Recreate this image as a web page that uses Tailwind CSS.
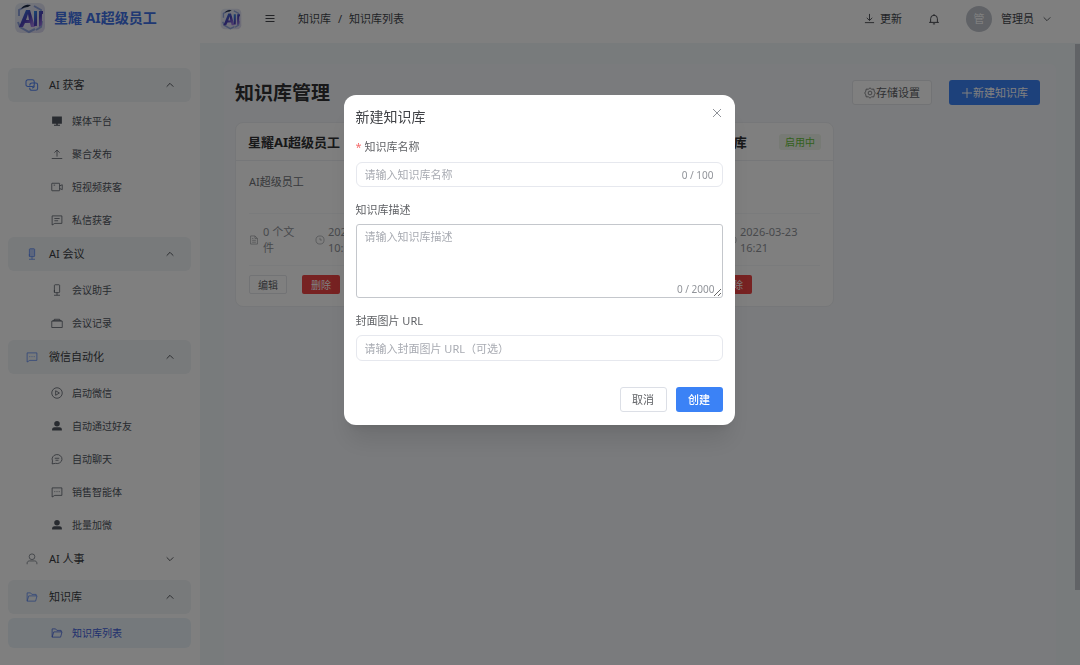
<!DOCTYPE html>
<html lang="zh-CN">
<head>
<meta charset="utf-8">
<title>知识库管理</title>
<script src="https://cdn.jsdelivr.net/npm/@tailwindcss/browser@4"></script>
</head>
<body class="h-screen overflow-hidden bg-white font-['Noto_Sans','Noto_Sans_CJK_SC',sans-serif] text-[11px] leading-4 text-[#44474d]">
<svg class="absolute size-0" aria-hidden="true">
  <defs>
    <linearGradient id="lg" x1="0" y1="0" x2="1" y2="1"><stop offset="0" stop-color="#2f8fe8"/><stop offset=".5" stop-color="#4a3fb8"/><stop offset="1" stop-color="#b98af0"/></linearGradient>
    <linearGradient id="lb" x1="0" y1="0" x2="1" y2="1"><stop offset="0" stop-color="#e9eff7"/><stop offset="1" stop-color="#d9d6ee"/></linearGradient>
    <symbol id="logo" viewBox="0 0 32 32">
      <rect x="1" y="1" width="30" height="30" rx="6" fill="url(#lb)"/>
      <path d="M14 3 5 8v6M4 20l2 5 9 5 6-3M20 4l7 4v5M28 19l-1 6-5 3" fill="none" stroke="#8fa3dc" stroke-width="2"/>
      <path d="M7 7Q10 2 17 3l-3 2Q10 5 7 7Z" fill="#1d2a44"/>
      <path d="M5 25 12 8h4l5 17h-4l-1-4h-5l-2 4ZM12 18h3l-1-6Z" fill="url(#lg)" fill-rule="evenodd"/>
      <path d="M20 9h3v15h-3zM25 9h4v3h-1v11l-3 2z" fill="url(#lg)"/>
    </symbol>
    <symbol id="folder" viewBox="0 0 16 16"><path d="M1.5 13.5v-11h4.6l1.7 2h5.7v2M1.5 13.5l2.2-7h11l-1.9 7Z"/></symbol>
    <symbol id="user" viewBox="0 0 16 16"><circle cx="8" cy="5" r="3.8"/><path d="M1.5 15v-1.6c0-1.8 1.500-2.800 3-2.800h7c1.500 0 3 1 3 2.800V15"/></symbol>
    <symbol id="userfill" viewBox="0 0 16 16"><g fill="currentColor" stroke="none"><circle cx="8" cy="5" r="3.700"/><path d="M1.500 14v-1.500c0-1.800 1.500-2.700 3-2.700h7c1.500 0 3 .9 3 2.700V14z"/></g></symbol>
    <symbol id="chat" viewBox="0 0 16 16"><path d="M1.500 2.500h13v10H5l-3.500 2.200ZM4.500 7.500h1.200M7.400 7.500h1.200M10.300 7.500h1.200"/></symbol>
    <symbol id="msg" viewBox="0 0 16 16"><path d="M1.500 2.500h13v10H5l-3.500 2.200ZM4.500 6h7M4.500 9h5"/></symbol>
    <symbol id="mic" viewBox="0 0 16 16"><rect x="4.500" y="1" width="7" height="10.500" rx="1"/><path d="M8 11.500V15M4 15h8M4.500 8v3.500"/></symbol>
    <symbol id="up" viewBox="0 0 12 12"><path d="M2 8 6 4l4 4"/></symbol>
    <symbol id="down" viewBox="0 0 12 12"><path d="M2 4l4 4 4-4"/></symbol>
    <symbol id="clock" viewBox="0 0 16 16"><circle cx="8" cy="8" r="6.500"/><path d="M8 4.500V8h3"/></symbol>
    <symbol id="doc" viewBox="0 0 16 16"><path d="M2.500 1.500h7l4 4v9h-11ZM9.500 1.500v4h4M5 8.500h6M5 11.500h6M5 5.500h2"/></symbol>
  </defs>
</svg>

<div class="flex h-full">
  <aside class="flex w-50 shrink-0 flex-col bg-white">
    <div class="flex h-10 shrink-0 items-center gap-2 pl-3.5 pb-1">
      <svg class="size-8"><use href="#logo"/></svg>
      <span class="text-[14px] font-bold text-[#4070e6]">星耀 AI超级员工</span>
    </div>
    <nav class="mt-7 flex flex-col px-2 pr-[9px] fill-none text-[#3a3d42]" aria-label="主菜单">
      <button class="flex h-[34px] w-full items-center gap-[11px] rounded-md bg-[#f0f4f7] pl-[18px] pr-4 text-left">
        <svg class="size-3 overflow-visible fill-none stroke-[#5585f2]" viewBox="0 0 16 16" stroke-width="1.400"><rect x="0" y="1" width="11" height="9" rx="2.500"/><path d="M5 8.500c0-2 1-3.300 3-3.300h5c1.500 0 2.500 1 2.500 2.500v4.800c0 1.500-1 2.500-2.500 2.500H8c-2 0-3-1-3-2.500v-1"/><path d="M11 9c0 2-1 3-3 3"/></svg>
        <span class="flex-1">AI 获客</span><svg class="size-2.5 fill-none stroke-current"><use href="#up"/></svg></button>
      <ul class="mb-px pt-0.5 text-[10px] text-[#505660]">
        <li><a href="#" class="flex h-[33px] items-center gap-[9px] pl-[43px]"><svg class="size-3" viewBox="0 0 16 16"><path d="M1.500 2h13v9.500h-13ZM7 11.500h2V13h3v1.200H4V13h3Z" fill="currentColor"/></svg>媒体平台</a></li>
        <li><a href="#" class="flex h-[33px] items-center gap-[9px] pl-[43px]"><svg class="size-3 fill-none stroke-current" viewBox="0 0 16 16"><path d="M8 11.500V3M4.500 6.200 8 2.800l3.500 3.400M1 14h14"/></svg>聚合发布</a></li>
        <li><a href="#" class="flex h-[33px] items-center gap-[9px] pl-[43px]"><svg class="size-3 fill-none stroke-current" viewBox="0 0 16 16"><rect x="1" y="3" width="10.500" height="10" rx=".5"/><path d="M11.500 6.500 15 5v6.500L11.500 10M3.500 5.500h2"/></svg>短视频获客</a></li>
        <li><a href="#" class="flex h-[33px] items-center gap-[9px] pl-[43px]"><svg class="size-3 fill-none stroke-current"><use href="#msg"/></svg>私信获客</a></li>
      </ul>
      <button class="flex h-[34px] w-full items-center gap-[11px] rounded-md bg-[#f0f4f7] pl-[18px] pr-4 text-left">
        <svg class="size-3 fill-[#b9cdfb] stroke-[#5585f2]"><use href="#mic"/></svg>
        <span class="flex-1">AI 会议</span><svg class="size-2.5 fill-none stroke-current"><use href="#up"/></svg></button>
      <ul class="mb-px pt-0.5 text-[10px] text-[#505660]">
        <li><a href="#" class="flex h-[33px] items-center gap-[9px] pl-[43px]"><svg class="size-3 fill-none stroke-current"><use href="#mic"/></svg>会议助手</a></li>
        <li><a href="#" class="flex h-[33px] items-center gap-[9px] pl-[43px]"><svg class="size-3 fill-none stroke-current" viewBox="0 0 16 16"><path d="M1 5.500h14v8.500H1ZM2.500 5.500v-1h11v1M4.500 4.500V3h7v1.500"/></svg>会议记录</a></li>
      </ul>
      <button class="flex h-[34px] w-full items-center gap-[11px] rounded-md bg-[#f0f4f7] pl-[18px] pr-4 text-left">
        <svg class="size-3 fill-none stroke-[#5585f2]"><use href="#chat"/></svg>
        <span class="flex-1">微信自动化</span><svg class="size-2.5 fill-none stroke-current"><use href="#up"/></svg></button>
      <ul class="mb-px pt-0.5 text-[10px] text-[#505660]">
        <li><a href="#" class="flex h-[33px] items-center gap-[9px] pl-[43px]"><svg class="size-3 fill-none stroke-current" viewBox="0 0 16 16"><circle cx="8" cy="8" r="7"/><path d="M6.200 5v6l5-3Z"/></svg>启动微信</a></li>
        <li><a href="#" class="flex h-[33px] items-center gap-[9px] pl-[43px]"><svg class="size-3"><use href="#userfill"/></svg>自动通过好友</a></li>
        <li><a href="#" class="flex h-[33px] items-center gap-[9px] pl-[43px]"><svg class="size-3 fill-none stroke-current" viewBox="0 0 16 16"><path d="M1.500 14.500 2 10.500A6.600 6 0 1 1 6 13.800ZM5 7h6M6 9.700h4"/></svg>自动聊天</a></li>
        <li><a href="#" class="flex h-[33px] items-center gap-[9px] pl-[43px]"><svg class="size-3 fill-none stroke-current"><use href="#chat"/></svg>销售智能体</a></li>
        <li><a href="#" class="flex h-[33px] items-center gap-[9px] pl-[43px]"><svg class="size-3"><use href="#userfill"/></svg>批量加微</a></li>
      </ul>
      <button class="mb-1 flex h-[34px] w-full items-center gap-[11px] rounded-md pl-[18px] pr-4 text-left">
        <svg class="size-3 fill-none stroke-[#6a7079]"><use href="#user"/></svg>
        <span class="flex-1">AI 人事</span><svg class="size-2.5 fill-none stroke-current"><use href="#down"/></svg></button>
      <button class="flex h-[34px] w-full items-center gap-[11px] rounded-md bg-[#f0f4f7] pl-[18px] pr-4 text-left">
        <svg class="size-3 fill-none stroke-[#5585f2]"><use href="#folder"/></svg>
        <span class="flex-1">知识库</span><svg class="size-2.5 fill-none stroke-current"><use href="#up"/></svg></button>
      <ul class="pt-1 text-[10px] text-[#3f60dc]">
        <li><a href="#" aria-current="page" class="flex h-[30px] items-center gap-[9px] rounded-md bg-[#ebf3f8] pl-[43px]"><svg class="size-3 fill-none stroke-current"><use href="#folder"/></svg>知识库列表</a></li>
      </ul>
    </nav>
  </aside>

  <div class="flex min-w-0 flex-1 flex-col">
    <header class="flex h-[43px] shrink-0 items-center bg-white pr-7 pb-1.5 pl-5">
      <svg class="size-[22px]"><use href="#logo"/></svg>
      <button class="ml-[22px]" aria-label="折叠菜单"><svg class="size-3 fill-none stroke-current" viewBox="0 0 12 12"><path d="M1.500 2.500h9M1.500 5.500h9M1.500 8.500h9" /></svg></button>
      <nav class="ml-[22px] flex gap-[7px]" aria-label="面包屑"><a href="#">知识库</a><span>/</span><span>知识库列表</span></nav>
      <button class="ml-auto flex items-center gap-[5px]"><svg class="size-[11px] fill-none stroke-current" viewBox="0 0 12 12"><path d="M6 1v7M3 5.300 6 8.200l3-2.900M1 10.500h10"/></svg>更新</button>
      <button class="ml-[26px]" aria-label="通知"><svg class="size-3 fill-none stroke-current" viewBox="0 0 16 16" stroke-width="1.300"><path d="M1.500 12.500h13M3.500 12.500V7.500a4.500 4.500 0 0 1 9 0v5M8 3V1.500M6.500 14.500h3"/></svg></button>
      <button class="ml-[26px] flex items-center"><span class="flex size-[26px] items-center justify-center rounded-full bg-[#c0c4cc] text-white">管</span><span class="ml-[9px]">管理员</span><svg class="ml-2 size-2.5 fill-none stroke-current"><use href="#down"/></svg></button>
    </header>

    <div class="flex min-h-0 flex-1 bg-[#f1f6f9]">
      <main class="mt-[21px] mr-[19px] ml-6 flex-1 rounded-t-md bg-[#f5f7fa] px-[11px] pt-4 pr-4">
        <div class="flex h-[25px] items-center">
          <h1 class="flex-1 text-[19px] leading-6 font-bold text-[#303133]">知识库管理</h1>
          <button class="flex h-[25px] items-center rounded-[3px] border border-[#e4e6eb] bg-white px-[11px] text-[#606266]"><svg class="size-3 fill-none stroke-current" viewBox="0 0 16 16"><path d="M8 1l2 2 3-.3.700 3L15 8l-1.300 2.300-.7 3-3-.3-2 2-2-2-3 .3-.7-3L1 8l1.300-2.300.7-3 3 .3Z"/><circle cx="8" cy="8" r="2.500"/></svg>存储设置</button>
          <button class="ml-[17px] flex h-[25px] items-center rounded-[3px] bg-[#3b82f6] px-3 text-white"><svg class="size-3 fill-none stroke-current" viewBox="0 0 12 12"><path d="M6 1v10M1 6h10"/></svg>新建知识库</button>
        </div>
        <div class="mt-[17px] grid grid-cols-4 gap-[19px]">
          <article class="rounded-lg border border-[#eceef2] bg-white">
            <div class="flex h-[38px] items-center justify-between border-b border-[#eceef2] px-3"><h2 class="text-[13px] font-bold whitespace-nowrap text-[#303133]">星耀AI超级员工</h2><span class="rounded-[3px] bg-[#eef5ea] px-1.5 text-[10px] text-[#67c23a]">启用中</span></div>
            <div class="px-[13px] pt-[13px]">
              <p class="h-[39px] text-[#707378]">AI超级员工</p>
              <div class="flex h-[53px] items-center gap-4 border-y border-[#f5f6f9] text-[#909399]">
                <span class="flex flex-1 items-center gap-1"><svg class="size-2.5 shrink-0 fill-none stroke-current"><use href="#doc"/></svg><span class="w-9">0 个文件</span></span>
                <span class="flex w-24 items-center gap-[3px]"><svg class="size-2.5 shrink-0 fill-none stroke-current"><use href="#clock"/></svg><span>2026-03-24 10:15</span></span>
              </div>
              <div class="flex gap-[15px] pt-[9px] pb-3 text-[10px]"><button class="h-[19px] rounded-[2px] border border-[#e4e6eb] px-2 text-[#606266]">编辑</button><button class="h-[19px] rounded-[2px] bg-[#ef4444] px-[9px] text-white">删除</button></div>
            </div>
          </article>
          <article class="rounded-lg border border-[#eceef2] bg-white">
            <div class="flex h-[38px] items-center justify-between border-b border-[#eceef2] px-3"><h2 class="text-[13px] font-bold whitespace-nowrap text-[#303133]">产品知识库</h2><span class="rounded-[3px] bg-[#eef5ea] px-1.5 text-[10px] text-[#67c23a]">启用中</span></div>
            <div class="px-[13px] pt-[13px]">
              <p class="h-[39px] text-[#707378]">产品资料</p>
              <div class="flex h-[53px] items-center gap-4 border-y border-[#f5f6f9] text-[#909399]">
                <span class="flex flex-1 items-center gap-1"><svg class="size-2.5 shrink-0 fill-none stroke-current"><use href="#doc"/></svg><span class="w-9">0 个文件</span></span>
                <span class="flex w-24 items-center gap-[3px]"><svg class="size-2.5 shrink-0 fill-none stroke-current"><use href="#clock"/></svg><span>2026-03-23 17:30</span></span>
              </div>
              <div class="flex gap-[15px] pt-[9px] pb-3 text-[10px]"><button class="h-[19px] rounded-[2px] border border-[#e4e6eb] px-2 text-[#606266]">编辑</button><button class="h-[19px] rounded-[2px] bg-[#ef4444] px-[9px] text-white">删除</button></div>
            </div>
          </article>
          <article class="rounded-lg border border-[#eceef2] bg-white">
            <div class="flex h-[38px] items-center justify-between border-b border-[#eceef2] px-3"><h2 class="text-[13px] font-bold whitespace-nowrap text-[#303133]">HR 招聘知识库</h2><span class="rounded-[3px] bg-[#eef5ea] px-1.5 text-[10px] text-[#67c23a]">启用中</span></div>
            <div class="px-[13px] pt-[13px]">
              <p class="h-[39px] text-[#707378]">招聘资料</p>
              <div class="flex h-[53px] items-center gap-4 border-y border-[#f5f6f9] text-[#909399]">
                <span class="flex flex-1 items-center gap-1"><svg class="size-2.5 shrink-0 fill-none stroke-current"><use href="#doc"/></svg><span class="w-9">0 个文件</span></span>
                <span class="flex w-24 items-center gap-[3px]"><svg class="size-2.5 shrink-0 fill-none stroke-current"><use href="#clock"/></svg><span>2026-03-23 16:21</span></span>
              </div>
              <div class="flex gap-[15px] pt-[9px] pb-3 text-[10px]"><button class="h-[19px] rounded-[2px] border border-[#e4e6eb] px-2 text-[#606266]">编辑</button><button class="h-[19px] rounded-[2px] bg-[#ef4444] px-[9px] text-white">删除</button></div>
            </div>
          </article>
        </div>
      </main>
      <div class="w-[5px] pt-px"><div class="h-[88%] bg-[#c3c6cc]"></div></div>
    </div>
  </div>
</div>

<div class="fixed inset-0 flex items-start justify-center bg-black/50 pt-[95px] pr-0.5">
  <form role="dialog" aria-modal="true" aria-labelledby="dlg" class="w-full max-w-[391px] rounded-xl bg-white px-3 pt-3 pb-[13px] text-[#606266] shadow-xl">
    <div class="flex h-5 items-start justify-between">
      <h2 id="dlg" class="text-sm text-[#404246]">新建知识库</h2>
      <button type="button" aria-label="关闭"><svg class="size-3 fill-none stroke-[#909399]" viewBox="0 0 12 12"><path d="M2 2l8 8M10 2l-8 8"/></svg></button>
    </div>
    <label for="name" class="mt-3 block"><span class="text-[#f56c6c]">*</span> 知识库名称</label>
    <div class="mt-[7px] flex h-[25px] items-center rounded-md border border-[#e6e8ee] px-2">
      <input id="name" type="text" placeholder="请输入知识库名称" class="min-w-0 flex-1 outline-none placeholder:text-[#a8abb2]"><span class="text-[10px] text-[#909399]">0 / 100</span>
    </div>
    <label for="desc" class="mt-[15px] block">知识库描述</label>
    <div class="relative mt-1.5 h-[74px]">
      <textarea id="desc" placeholder="请输入知识库描述" class="block size-full resize-y rounded-[3px] border border-[#c4c7cc] px-2 py-1 outline-none placeholder:text-[#a8abb2]"></textarea>
      <span class="absolute right-2 bottom-px text-[10px] text-[#909399]">0 / 2000</span>
    </div>
    <label for="cover" class="mt-[15px] block">封面图片 URL</label>
    <input id="cover" type="text" placeholder="请输入封面图片 URL（可选）" class="mt-[6px] block h-[26px] w-full rounded-md border border-[#e6e8ee] px-2 outline-none placeholder:text-[#a8abb2]">
    <div class="mt-[26px] flex justify-end gap-[9px]">
      <button type="button" class="h-[25px] w-[47px] rounded-[3px] border border-[#dcdfe6]">取消</button>
      <button type="submit" class="h-[25px] w-[47px] rounded-[3px] bg-[#3b82f6] font-medium text-white">创建</button>
    </div>
  </form>
</div>
</body>
</html>
